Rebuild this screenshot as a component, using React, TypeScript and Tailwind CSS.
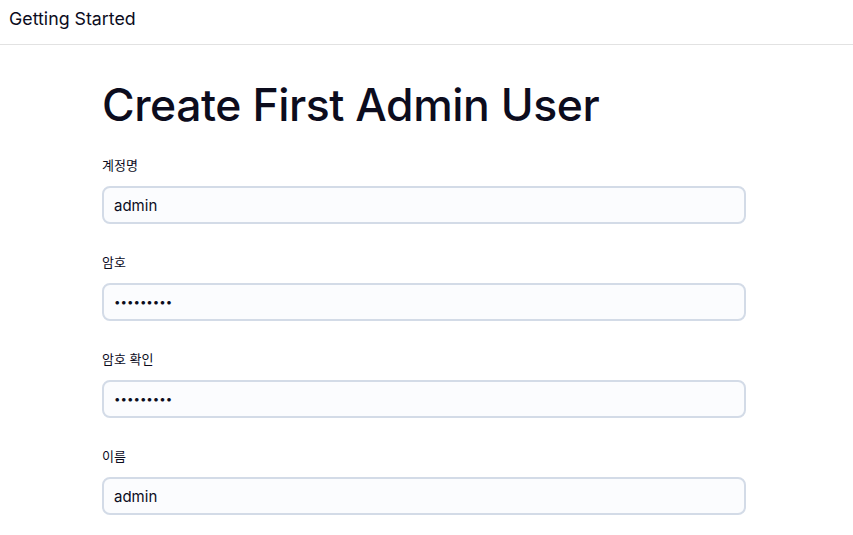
export default function App() {
  const fields = [
    { label: '계정명', type: 'text', value: 'admin' },
    { label: '암호', type: 'password', value: 'admin1234' },
    { label: '암호 확인', type: 'password', value: 'admin1234' },
    { label: '이름', type: 'text', value: 'admin' },
  ]

  return (
    <div className="min-h-screen bg-white text-[#0c0c1d]" style={{ fontFamily: 'Inter, "Noto Sans CJK KR", sans-serif' }}>
      <header className="h-[45px] border-b border-[#e2e2e2] px-[9px] flex items-center">
        <span className="text-[17.8px] leading-none -mt-[7px]">Getting Started</span>
      </header>

      <main className="pl-[102px] pr-[107px] pt-[35px]">
        <h1 className="text-[44.5px] font-medium leading-[50px] tracking-[-0.45px] mb-[27px]">Create First Admin User</h1>

        <form className="flex flex-col gap-[30px]">
          {fields.map(f => (
            <div key={f.label}>
              <label className="block text-[13px] leading-[16px] mb-[13px]">{f.label}</label>
              <input
                type={f.type}
                defaultValue={f.value}
                className={`w-full h-[38px] rounded-[8px] border-2 border-[#d3dbe7] bg-[#fbfcfe] px-[10px] outline-none ${
                  f.type === 'password' ? 'text-[11.5px]' : 'text-[15px]'
                }`}
              />
            </div>
          ))}
        </form>
      </main>
    </div>
  )
}
